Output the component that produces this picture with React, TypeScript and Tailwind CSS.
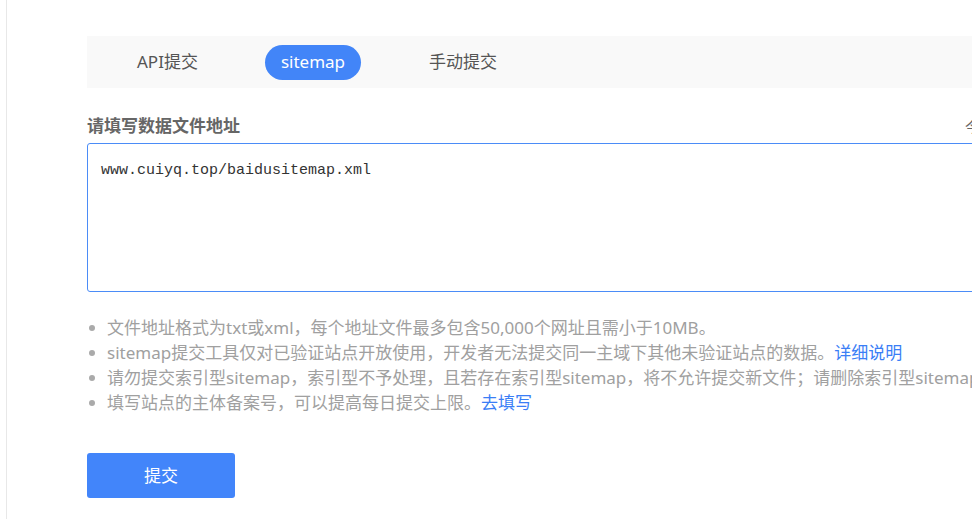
import React from "react";

const tips = [
  { text: "文件地址格式为txt或xml，每个地址文件最多包含50,000个网址且需小于10MB。" },
  {
    text: "sitemap提交工具仅对已验证站点开放使用，开发者无法提交同一主域下其他未验证站点的数据。",
    link: "详细说明",
  },
  {
    text: "请勿提交索引型sitemap，索引型不予处理，且若存在索引型sitemap，将不允许提交新文件；请删除索引型sitemap后再提交。",
  },
  { text: "填写站点的主体备案号，可以提高每日提交上限。", link: "去填写" },
];

export default function App() {
  return (
    <div
      className="flex h-[519px] w-full overflow-hidden bg-white"
      style={{ fontFamily: '"Noto Sans", "Noto Sans CJK SC", sans-serif' }}
    >
      <div className="w-[6px] shrink-0 bg-white" />
      <div className="w-px shrink-0 bg-[#e8e8e8]" />

      <div className="w-[1100px] shrink-0 pl-[80px] pt-[36px]">
        {/* tabs */}
        <div className="flex h-[52px] items-center bg-[#f9f9f9] pl-[32px] text-[17px] text-[#555]">
          <div className="px-[18px]">API提交</div>
          <div className="ml-[49px] flex h-[35px] items-center rounded-full bg-[#4285f8] px-[16px] text-white">
            sitemap
          </div>
          <div className="ml-[50px] px-[18px]">手动提交</div>
        </div>

        {/* label */}
        <div className="mt-[26px] flex h-[24px] items-center text-[17px]">
          <div className="w-[878px] shrink-0 font-bold text-[#666]">请填写数据文件地址</div>
          <div className="whitespace-nowrap text-[14px] text-[#666]">今日剩余可提交量</div>
        </div>

        {/* input */}
        <div
          className="mt-[5px] h-[149px] w-full rounded-[3px] border border-[#4b8cf7] px-[13px] pt-[17px] text-[15px] leading-[20px] text-[#333]"
          style={{ fontFamily: '"Liberation Mono", monospace' }}
        >
          www.cuiyq.top/baidusitemap.xml
        </div>

        {/* tips */}
        <ul className="mt-[23px] text-[17px] leading-[25px] text-[#a0a0a0]">
          {tips.map((t, i) => (
            <li key={i} className="flex items-center whitespace-nowrap">
              <span className="ml-[2px] mr-[12px] h-[6px] w-[6px] shrink-0 rounded-full bg-[#aaa]" />
              <span>
                {t.text}
                {t.link && <a className="text-[#3a7ef6]">{t.link}</a>}
              </span>
            </li>
          ))}
        </ul>

        {/* submit */}
        <button className="mt-[38px] flex h-[45px] w-[148px] items-center justify-center rounded-[3px] bg-[#4285fa] text-[17px] text-white">
          提交
        </button>
      </div>
    </div>
  );
}
